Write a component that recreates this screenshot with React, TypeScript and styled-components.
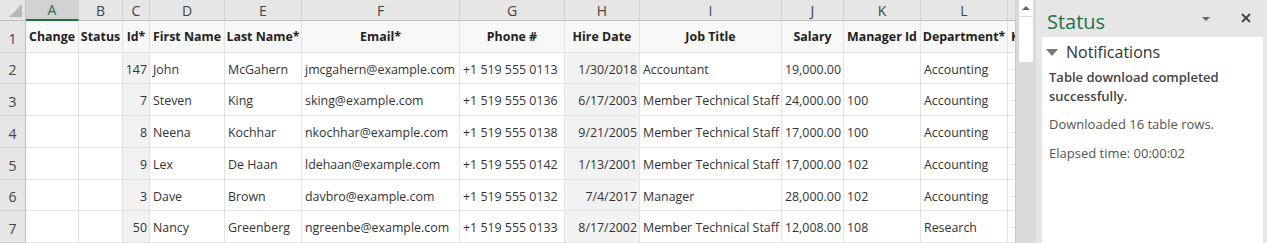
import { Fragment } from 'react'
import styled, { createGlobalStyle } from 'styled-components'

const GlobalStyle = createGlobalStyle`
  html, body {
    margin: 0;
    padding: 0;
    background: #e6e6e6;
    font-family: 'Open Sans', 'Noto Sans', sans-serif;
  }
`

const columns = ['A', 'B', 'C', 'D', 'E', 'F', 'G', 'H', 'I', 'J', 'K', 'L', '']
const widths = [53, 44, 27, 75, 77, 158, 105, 75, 142, 62, 77, 87, 8]
const rowHeights = [32, 31, 32, 32, 32, 31, 32]

type Align = 'left' | 'right' | 'center'

const headers = [
  'Change',
  'Status',
  'Id*',
  'First Name',
  'Last Name*',
  'Email*',
  'Phone #',
  'Hire Date',
  'Job Title',
  'Salary',
  'Manager Id',
  'Department*',
]

const aligns: Align[] = [
  'left', 'left', 'right', 'left', 'left', 'left', 'left', 'right', 'left', 'right', 'left', 'left',
]
const shaded = [false, false, true, false, false, false, false, true, false, false, false, false]

const employees = [
  ['', '', '147', 'John', 'McGahern', 'jmcgahern@example.com', '+1 519 555 0113', '1/30/2018', 'Accountant', '19,000.00', '', 'Accounting'],
  ['', '', '7', 'Steven', 'King', 'sking@example.com', '+1 519 555 0136', '6/17/2003', 'Member Technical Staff', '24,000.00', '100', 'Accounting'],
  ['', '', '8', 'Neena', 'Kochhar', 'nkochhar@example.com', '+1 519 555 0138', '9/21/2005', 'Member Technical Staff', '17,000.00', '100', 'Accounting'],
  ['', '', '9', 'Lex', 'De Haan', 'ldehaan@example.com', '+1 519 555 0142', '1/13/2001', 'Member Technical Staff', '17,000.00', '102', 'Accounting'],
  ['', '', '3', 'Dave', 'Brown', 'davbro@example.com', '+1 519 555 0132', '7/4/2017', 'Manager', '28,000.00', '102', 'Accounting'],
  ['', '', '50', 'Nancy', 'Greenberg', 'ngreenbe@example.com', '+1 519 555 0133', '8/17/2002', 'Member Technical Staff', '12,008.00', '108', 'Research'],
]

const Layout = styled.div`
  display: flex;
  width: 1267px;
  height: 243px;
  overflow: hidden;
  background: #e6e6e6;
`

const Sheet = styled.div`
  display: grid;
  grid-template-columns: 26px ${widths.map((w) => `${w}px`).join(' ')};
  grid-template-rows: 21px ${rowHeights.map((h) => `${h}px`).join(' ')};
  width: 1016px;
  background: #fff;
  font-size: 12.4px;
  color: #333;
`

const Corner = styled.div`
  position: relative;
  background: #e6e6e6;
  border-right: 1px solid #c8c8c8;
  border-bottom: 1px solid #bdbdbd;

  &::after {
    content: '';
    position: absolute;
    right: 3px;
    bottom: 3px;
    border-style: solid;
    border-width: 0 0 13px 13px;
    border-color: transparent transparent #b9b9b9 transparent;
  }
`

const ColHeader = styled.div<{ $selected?: boolean }>`
  display: flex;
  align-items: center;
  justify-content: center;
  box-sizing: border-box;
  background: ${(p) => (p.$selected ? '#d2d2d2' : '#e6e6e6')};
  color: ${(p) => (p.$selected ? '#217346' : '#444')};
  border-right: 1px solid #d0d0d0;
  border-bottom: ${(p) => (p.$selected ? '2px solid #217346' : '1px solid #bdbdbd')};
  font-size: 14px;
  overflow: hidden;
`

const RowHeader = styled.div`
  display: flex;
  align-items: flex-end;
  justify-content: center;
  box-sizing: border-box;
  padding-bottom: 4px;
  background: #e6e6e6;
  color: #444;
  border-right: 1px solid #bdbdbd;
  border-bottom: 1px solid #d0d0d0;
  font-size: 14px;
`

const HeadCell = styled.div`
  display: flex;
  align-items: center;
  justify-content: center;
  box-sizing: border-box;
  background: #f8f8f8;
  border-right: 1px solid #e3e3e3;
  border-bottom: 1px solid #e3e3e3;
  font-weight: 700;
  color: #222;
  white-space: nowrap;
  overflow: hidden;
`

const Cell = styled.div<{ $align: Align; $shaded?: boolean }>`
  display: flex;
  align-items: center;
  justify-content: ${(p) => (p.$align === 'right' ? 'flex-end' : p.$align === 'center' ? 'center' : 'flex-start')};
  box-sizing: border-box;
  padding: 2px 2px 0 3px;
  background: ${(p) => (p.$shaded ? '#f2f2f2' : '#fff')};
  border-right: 1px solid #e3e3e3;
  border-bottom: 1px solid #e3e3e3;
  white-space: nowrap;
  overflow: hidden;
`

const EdgeCell = styled.div`
  display: flex;
  align-items: center;
  justify-content: flex-end;
  box-sizing: border-box;
  border-right: 1px solid #c8c8c8;
  border-bottom: 1px solid #e3e3e3;
  color: #bbb;
  font-size: 9px;
  overflow: hidden;
`

const EdgeHeadCell = styled(EdgeCell)`
  justify-content: flex-start;
  padding-left: 3px;
  background: #f8f8f8;
  color: #222;
  font-size: 12.4px;
  font-weight: 700;
`

const Scrollbar = styled.div`
  display: flex;
  flex-direction: column;
  align-items: center;
  width: 20px;
  background: #dadada;
`

const ScrollButton = styled.div`
  display: flex;
  align-items: center;
  justify-content: center;
  width: 14px;
  height: 16px;
  background: #fff;
  margin-bottom: 1px;

  &::before {
    content: '';
    border-style: solid;
    border-width: 0 4px 4px 4px;
    border-color: transparent transparent #666 transparent;
  }
`

const ScrollThumb = styled.div`
  width: 14px;
  height: 45px;
  background: #fff;
`

const Pane = styled.div`
  display: flex;
  flex-direction: column;
  flex: 1;
  margin-left: 6px;
  padding-right: 4px;
  background: #e6e6e6;
`

const PaneTitleBar = styled.div`
  display: flex;
  align-items: center;
  height: 37px;
  padding: 0 12px 0 5px;
  box-sizing: border-box;
`

const PaneTitle = styled.div`
  flex: 1;
  font-size: 20px;
  color: #217346;
  padding-top: 6px;
`

const Caret = styled.div`
  width: 0;
  height: 0;
  margin-right: 31px;
  border-style: solid;
  border-width: 4px 4px 0 4px;
  border-color: #666 transparent transparent transparent;
`

const CloseIcon = styled.svg`
  width: 10px;
  height: 10px;
  margin-bottom: 2px;
`

const PaneBody = styled.div`
  flex: 1;
  background: #fff;
  padding: 4px 7px;
  color: #555;
  font-size: 13px;
`

const SectionHeader = styled.div`
  display: flex;
  align-items: center;
  gap: 8px;
  font-size: 16px;
  color: #333;
  margin-left: -3px;

  &::before {
    content: '';
    border-style: solid;
    border-width: 7px 6px 0 6px;
    border-color: #777 transparent transparent transparent;
  }
`

const Message = styled.p<{ $bold?: boolean }>`
  margin: ${(p) => (p.$bold ? '5px 0 9px' : '0 0 10px')};
  font-weight: ${(p) => (p.$bold ? 600 : 400)};
  color: ${(p) => (p.$bold ? '#444' : '#555')};
  line-height: 19px;
`

export default function App() {
  return (
    <Layout>
      <GlobalStyle />
      <Sheet>
        <Corner />
        {columns.map((c, i) => (
          <ColHeader key={`col-${i}`} $selected={i === 0}>
            {c}
          </ColHeader>
        ))}

        <RowHeader>1</RowHeader>
        {headers.map((h) => (
          <HeadCell key={h}>{h}</HeadCell>
        ))}
        <EdgeHeadCell>K</EdgeHeadCell>

        {employees.map((row, r) => (
          <Fragment key={`row-${r}`}>
            <RowHeader>{r + 2}</RowHeader>
            {row.map((value, c) => (
              <Cell key={`c-${r}-${c}`} $align={aligns[c]} $shaded={shaded[c]}>
                {value}
              </Cell>
            ))}
            <EdgeCell>-</EdgeCell>
          </Fragment>
        ))}
      </Sheet>

      <Scrollbar>
        <ScrollButton />
        <ScrollThumb />
      </Scrollbar>

      <Pane>
        <PaneTitleBar>
          <PaneTitle>Status</PaneTitle>
          <Caret />
          <CloseIcon viewBox="0 0 10 10">
            <path d="M1 1 L9 9 M9 1 L1 9" stroke="#444" strokeWidth="1.8" />
          </CloseIcon>
        </PaneTitleBar>
        <PaneBody>
          <SectionHeader>Notifications</SectionHeader>
          <Message $bold>Table download completed successfully.</Message>
          <Message>Downloaded 16 table rows.</Message>
          <Message>Elapsed time: 00:00:02</Message>
        </PaneBody>
      </Pane>
    </Layout>
  )
}
